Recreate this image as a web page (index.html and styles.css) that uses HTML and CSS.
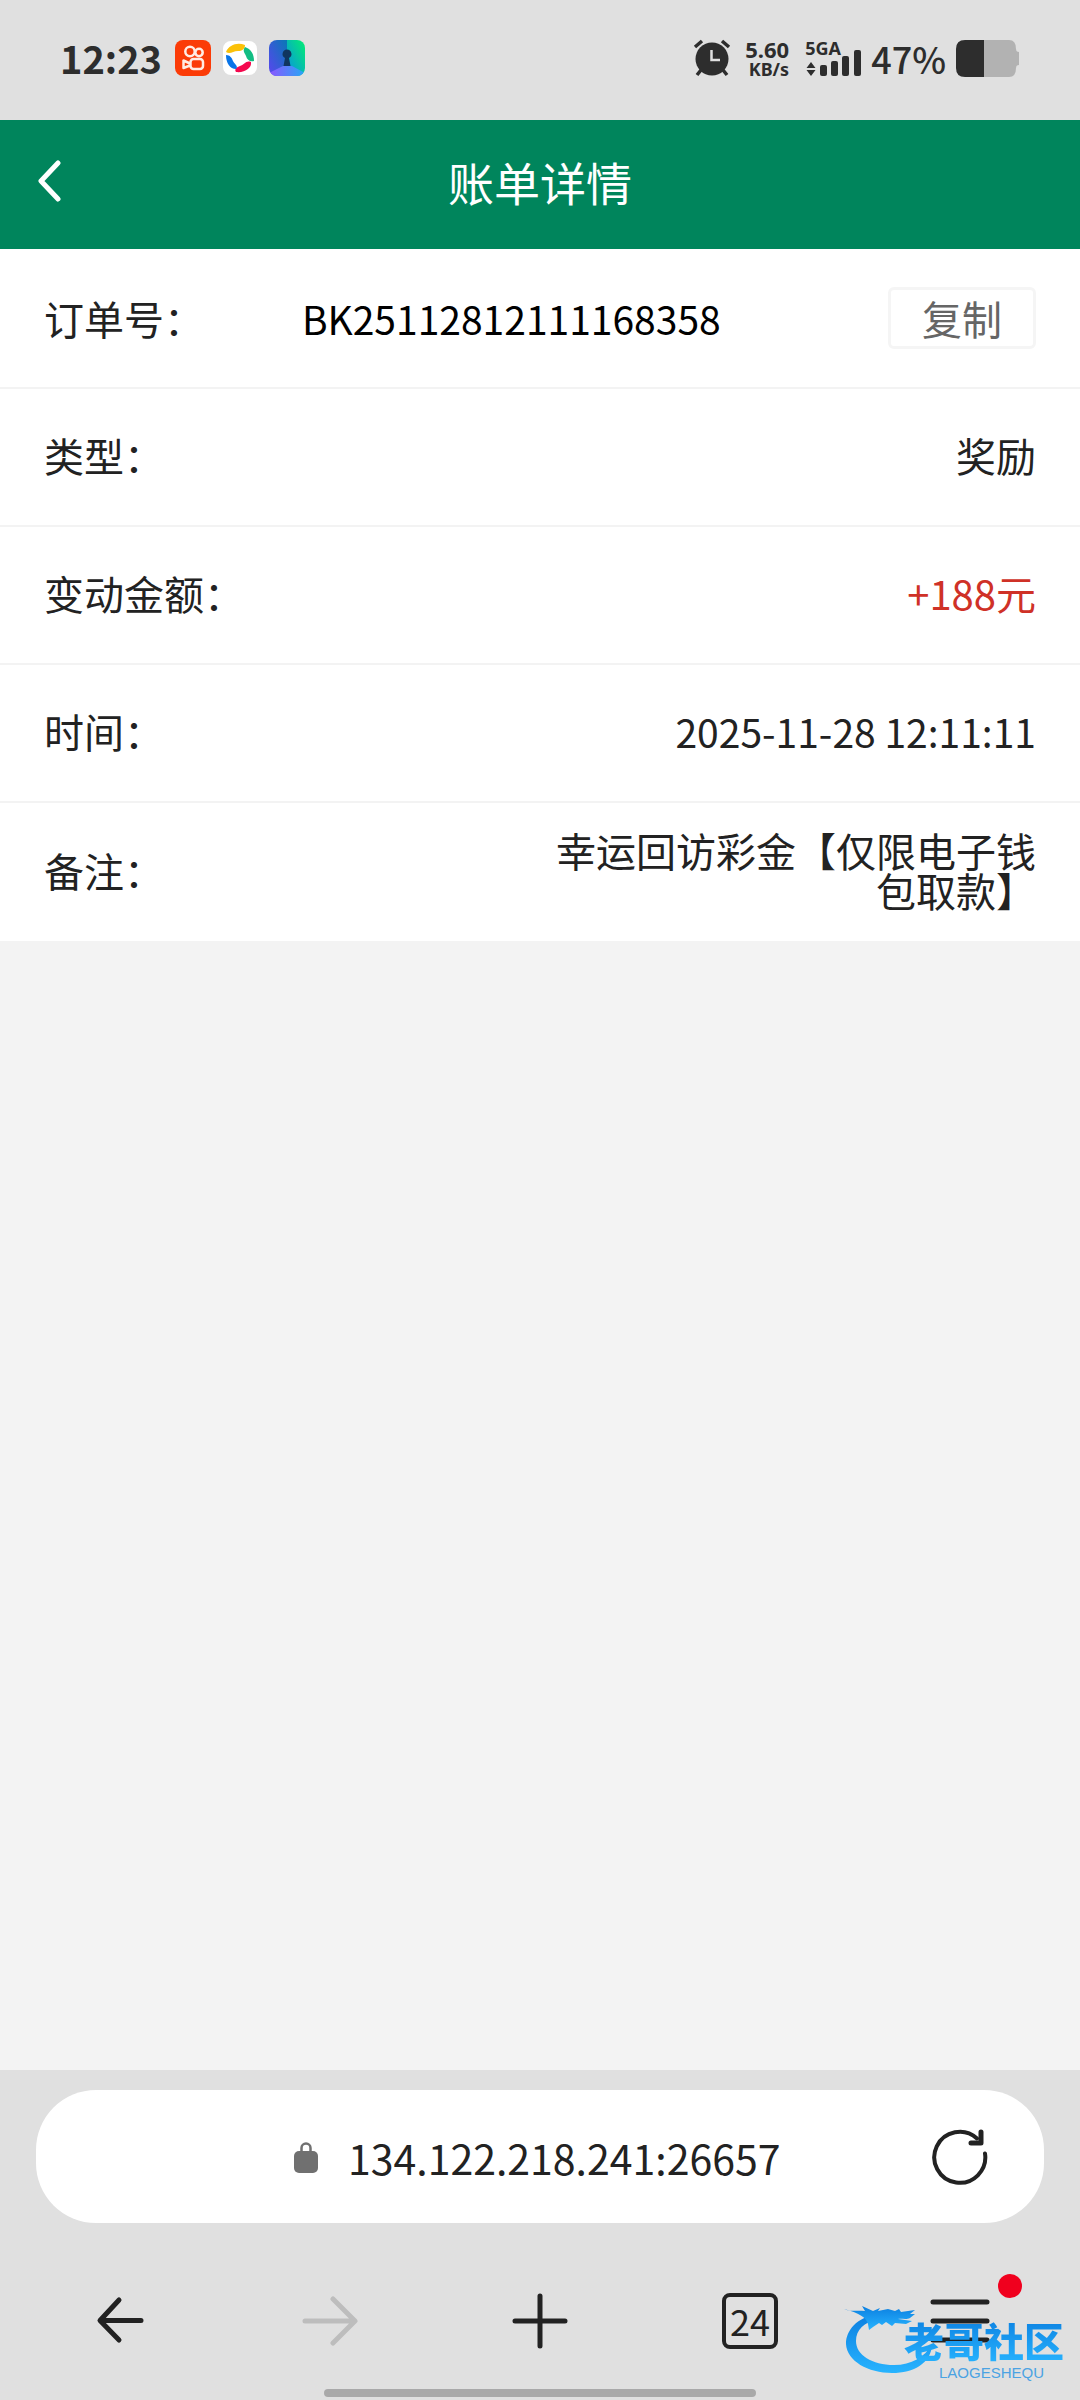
FILE: index.html
```html
<!DOCTYPE html>
<html lang="zh-CN">
<head>
<meta charset="utf-8">
<meta name="viewport" content="width=device-width">
<title>账单详情</title>
<link rel="stylesheet" href="styles.css">
</head>
<body>
<div class="screen">
  <div class="status">
    <span class="clock">12:23</span>
    <div class="apps">
      <svg width="36" height="36" viewBox="0 0 36 36" aria-hidden="true">
        <rect width="36" height="36" rx="8" fill="#fb3b07"/>
        <g fill="none" stroke="#ffece4" stroke-width="2.500">
          <circle cx="15" cy="11.500" r="4.700"/><circle cx="24" cy="12.500" r="3.700"/>
          <rect x="15.500" y="19" width="12.500" height="10" rx="3"/>
          <path d="M15 23.500 8.500 20.500v7.500L15 25.500" stroke-linejoin="round"/>
        </g>
      </svg>
      <svg width="36" height="36" viewBox="0 0 36 36" aria-hidden="true">
        <rect x="1" y="1" width="34" height="34" rx="8" fill="#fff"/>
        <path d="M4 12C7 5 15 2 23 5c0 4-3 6-7 6-5 0-8 4-12 1z" fill="#fbc108"/>
        <path d="M23 7c6 2 9 7 9 14-4 1-7-1-8-5-1-3-4-5-1-9z" fill="#12bd83"/>
        <path d="M29 22c1 6-6 11-15 10-2-3 1-5 4-6 4-1 6-6 11-4z" fill="#f4094e"/>
        <path d="M14 29C8 29 4 23 4 15c4 0 6 3 7 6s6 5 3 8z" fill="#0874e8"/>
      </svg>
      <svg width="36" height="36" viewBox="0 0 36 36" aria-hidden="true">
        <defs>
          <linearGradient id="vaultLeft" x1="0" y1="1" x2="1" y2="0"><stop stop-color="#5b45f0"/><stop offset="1" stop-color="#0878b5"/></linearGradient>
          <linearGradient id="vaultRight" x1="0" y1="1" x2="1" y2="0"><stop stop-color="#0a8de8"/><stop offset="1" stop-color="#02ee72"/></linearGradient>
          <linearGradient id="vaultFloor"><stop stop-color="#8d55ff"/><stop offset="1" stop-color="#25a8f5"/></linearGradient>
          <clipPath id="vaultClip"><rect width="36" height="36" rx="8"/></clipPath>
        </defs>
        <g clip-path="url(#vaultClip)">
          <path d="M0 0h18v36H0z" fill="url(#vaultLeft)"/>
          <path d="M18 0h18v36H18z" fill="url(#vaultRight)"/>
          <path d="M0 33 14 26h9l13 7v3H0z" fill="url(#vaultFloor)"/>
        </g>
        <path d="M18 9.500a4.500 4.500 0 0 0-2 8.500L14.500 26h7L20 18a4.500 4.500 0 0 0-2-8.500z" fill="#10355f"/>
      </svg>
    </div>
    <svg class="alarm" width="38" height="38" viewBox="0 0 38 38" aria-hidden="true">
      <g fill="none" stroke="#2d2d2d" stroke-width="3.500">
        <path d="M2 8 9 2M36 8l-7-6M8 31l-4 5M30 31l4 5"/>
      </g>
      <circle cx="19" cy="20" r="16.500" fill="#2d2d2d"/>
      <path d="M18.500 11v10H27" fill="none" stroke="#e0e0e0" stroke-width="2.500"/>
    </svg>
    <div class="speed"><span class="rate">5.60</span><span class="unit">KB/s</span></div>
    <div class="signal">
      <span class="unit">5GA</span>
      <svg width="56" height="38" viewBox="0 0 56 38" aria-hidden="true">
        <path d="m6 23 4.500 6h-9zM6 37l4.500-6h-9z" fill="#2d2d2d"/>
        <g fill="#2d2d2d">
          <rect x="15" y="26" width="7" height="11" rx="2"/><rect x="26" y="22" width="7" height="15" rx="2"/>
          <rect x="37" y="17" width="7" height="20" rx="2"/><rect x="49" y="11" width="7" height="26" rx="2"/>
        </g>
      </svg>
    </div>
    <span class="percent">47%</span>
    <svg class="battery" width="64" height="37" viewBox="0 0 64 37" aria-hidden="true">
      <path d="M28 0h25q7 0 7 9 0 3 3 3v13q-3 0-3 3 0 9-7 9H28z" fill="#b2b2b2"/>
      <path d="M9 0h19v37H9q-9 0-9-9V9q0-9 9-9z" fill="#2d2d2d"/>
    </svg>
  </div>

  <header class="header">
    <a class="back" href="#" aria-label="返回">
      <svg width="24" height="42" viewBox="0 0 24 42" aria-hidden="true"><path d="M20 3 3 21l17 18" fill="none" stroke="#fff" stroke-width="5" stroke-linecap="round" stroke-linejoin="round"/></svg>
    </a>
    <h1 class="title">账单详情</h1>
  </header>

  <main class="content">
    <dl class="details">
      <div class="row row-order">
        <dt>订单号：</dt>
        <dd class="order"><span class="number">BK25112812111168358</span><button class="copy" type="button">复制</button></dd>
      </div>
      <div class="row"><dt>类型：</dt><dd>奖励</dd></div>
      <div class="row"><dt>变动金额：</dt><dd class="amount">+188元</dd></div>
      <div class="row"><dt>时间：</dt><dd class="number">2025-11-28 12:11:11</dd></div>
      <div class="row"><dt>备注：</dt><dd>幸运回访彩金【仅限电子钱包取款】</dd></div>
    </dl>
  </main>

  <footer class="browser">
    <form class="address">
      <label class="site" for="url">
        <svg width="24" height="32" viewBox="0 0 24 32" aria-hidden="true">
          <path d="M7.500 12V7a4.500 4.500 0 0 1 9 0v5" fill="none" stroke="#707070" stroke-width="2.500"/>
          <rect y="10" width="24" height="22" rx="5" fill="#707070"/>
        </svg>
      </label>
      <input class="url" id="url" type="text" value="134.122.218.241:26657" aria-label="网址">
      <button class="reload" type="button" aria-label="刷新">
        <svg width="56" height="56" viewBox="0 0 56 56" aria-hidden="true">
          <path d="M53 24.500A25.500 25.500 0 1 1 45 9.500" fill="none" stroke="#222" stroke-width="4" stroke-linecap="round"/>
          <path d="M49 3v11H39" fill="none" stroke="#222" stroke-width="5" stroke-linecap="round" stroke-linejoin="round"/>
        </svg>
      </button>
    </form>
    <nav class="nav">
      <button type="button" aria-label="后退"><svg width="56" height="56" viewBox="0 0 56 56" aria-hidden="true"><path d="M27 7 8 27.500 27 47M9 27.500h40" fill="none" stroke="#222" stroke-width="5" stroke-linecap="round" stroke-linejoin="round"/></svg></button>
      <button type="button" aria-label="前进"><svg width="56" height="56" viewBox="0 0 56 56" aria-hidden="true"><path d="m31 6 22 22-22 22M3 28h49" fill="none" stroke="#bdbdbd" stroke-width="5" stroke-linecap="round" stroke-linejoin="round"/></svg></button>
      <button type="button" aria-label="新建标签页"><svg width="56" height="56" viewBox="0 0 56 56" aria-hidden="true"><path d="M28 3v50M3 28h50" fill="none" stroke="#222" stroke-width="5" stroke-linecap="round"/></svg></button>
      <button type="button" aria-label="标签页"><span class="tabs">24</span></button>
      <button class="menu" type="button" aria-label="菜单"><svg width="60" height="56" viewBox="0 0 60 56" aria-hidden="true"><path d="M3 9h54M3 28h54M3 47h54" fill="none" stroke="#222" stroke-width="5" stroke-linecap="round"/></svg><span class="badge"></span></button>
    </nav>
    <div class="home-bar"></div>

    <div class="watermark">
      <svg class="dragon" width="94" height="70" viewBox="0 0 94 70" aria-hidden="true">
        <defs><linearGradient id="dragonBlue" x1="0" y1="0" x2="0" y2="1"><stop stop-color="#0b7fe0"/><stop offset="1" stop-color="#28b4ff"/></linearGradient></defs>
        <g fill="url(#dragonBlue)">
          <path d="M32 9C13 13 2 25 2 39c1 17 22 29 46 29 22 0 39-10 40-28-8 12-20 20-38 20-22 0-38-10-38-24 0-11 8-19 22-22z"/>
          <path d="M0 4c7 3 12 1 21 2L18 1l11 5 7-3-2 3 10-2 7 2 4-2 2 3 14-2-5 4h5l-5 4c-4 2-9 0-12 1l14 2-6 3-11-1-3 3-6-4-4 3-3-2-6 4-4 3-1-6C22 12 15 8 0 4z"/>
        </g>
      </svg>
      <div class="brand"><span class="brand-name">老哥社区</span><span class="brand-latin">LAOGESHEQU</span></div>
    </div>
  </footer>
</div>
</body>
</html>
```
FILE: styles.css
```css
* { box-sizing: border-box; }

body {
  margin: 0;
  background: #f3f3f3;
  color: #222;
  font-family: "Noto Sans CJK SC", sans-serif;
  font-size: 40px;
  line-height: 40px;
}

button, input {
  padding: 0;
  border: 0;
  background: none;
  color: inherit;
  font: inherit;
}

svg { display: block; flex: none; }

.screen {
  display: flex;
  flex-direction: column;
  min-height: 100vh;
}

/* Phone status bar */
.status {
  display: flex;
  align-items: center;
  height: 120px;
  padding: 0 60px 4px;
  background: #e0e0e0;
  color: #2d2d2d;
  font-weight: 700;
}
.clock { font-size: 38px; }
.apps { display: flex; gap: 11px; margin-left: 13px; }
.alarm { margin-left: auto; }
.speed {
  display: flex;
  flex-direction: column;
  align-items: flex-end;
  margin-left: 14px;
  font-family: "Noto Sans", sans-serif;
}
.rate { font-size: 22px; line-height: 22px; }
.unit { font-size: 18px; line-height: 18px; }
.signal {
  display: grid;
  margin-left: 16px;
  font-family: "Noto Sans", sans-serif;
}
.signal > * { grid-area: 1 / 1; }
.percent { margin-left: 10px; font-size: 36px; font-weight: 500; }
.battery { margin-left: 10px; }

/* Page header */
.header {
  display: grid;
  grid-template-columns: 1fr auto 1fr;
  align-items: center;
  height: 129px;
  padding: 0 38px 8px;
  background: #00855c;
  color: #fff;
}
.back { justify-self: start; }
.title {
  margin: 0;
  font-size: 46px;
  font-weight: 400;
  line-height: 64px;
}

/* Bill details */
.content { flex: 1; }
.details { margin: 0; background: #fff; }
.row {
  display: flex;
  align-items: center;
  justify-content: space-between;
  min-height: 138px;
  padding: 0 44px 4px;
  border-bottom: 2px solid #f3f3f3;
}
.row:last-child { border-bottom: 0; }
.row dd {
  max-width: 50%;
  margin: 0;
  text-align: right;
}
.row .amount { color: #cf3127; }
.row .number { font-size: 39px; }
.row-order { min-height: 140px; padding-bottom: 0; }
.row-order dt { flex: 0 0 26%; }
.row .order {
  display: flex;
  flex: 1;
  align-items: center;
  justify-content: space-between;
  max-width: none;
  color: #000;
}
.copy {
  width: 148px;
  height: 62px;
  border: 3px solid #f5f5f5;
  border-radius: 6px;
  color: #666;
}

/* Browser toolbar */
.browser {
  position: relative;
  padding: 20px 0 3px;
  background: #e0e0e0;
}
.address {
  display: grid;
  grid-template-columns: 1fr 24px 468px 1fr;
  align-items: center;
  height: 133px;
  margin: 0 36px;
  border-radius: 60px;
  background: #fff;
}
.site { grid-column: 2; }
.url {
  width: 100%;
  height: 60px;
  padding-left: 30px;
  outline: 0;
  font-size: 41px;
}
.reload { justify-self: end; margin-right: 56px; }
.nav {
  display: grid;
  grid-template-columns: repeat(5, 1fr);
  height: 132px;
  margin-top: 32px;
  padding: 0 15px;
}
.nav button {
  display: flex;
  align-items: center;
  justify-content: center;
}
.tabs {
  width: 56px;
  height: 56px;
  border: 4px solid #222;
  border-radius: 8px;
  font-size: 36px;
  line-height: 46px;
}
.menu { position: relative; }
.badge {
  position: absolute;
  top: 19px;
  left: calc(50% + 38px);
  width: 24px;
  height: 24px;
  border-radius: 50%;
  background: #f0001e;
}
.home-bar {
  width: 40%;
  height: 8px;
  margin: 2px auto 0;
  border-radius: 4px;
  background: #a9a9a9;
}

/* Community watermark over the toolbar */
.watermark {
  position: absolute;
  right: 16px;
  bottom: 20px;
  display: grid;
  grid-template-columns: 60px auto;
  pointer-events: none;
}
.dragon { grid-area: 1 / 1; }
.brand {
  display: flex;
  flex-direction: column;
  align-items: flex-end;
  grid-area: 1 / 2;
  padding-top: 10px;
}
.brand-name {
  background: linear-gradient(#0b7fe0, #28b4ff);
  background-clip: text;
  -webkit-background-clip: text;
  color: transparent;
  font-size: 40px;
  font-weight: 900;
  line-height: 50px;
}
.brand-latin {
  padding-right: 20px;
  color: #4ba3e3;
  font-family: "Liberation Sans", sans-serif;
  font-size: 15px;
  line-height: 15px;
}
```
